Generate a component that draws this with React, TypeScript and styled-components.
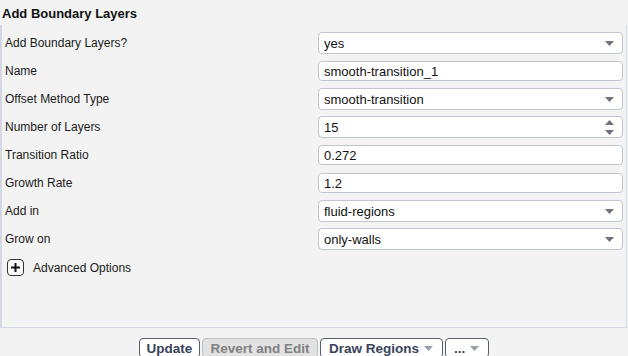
import styled, { createGlobalStyle } from 'styled-components'

const GlobalStyle = createGlobalStyle`
  html, body {
    margin: 0;
    padding: 0;
    background: #f3f3f3;
    font-family: "Liberation Sans", Arial, sans-serif;
    color: #1b1b1b;
  }
`

type Field =
  | { label: string; kind: 'select'; value: string }
  | { label: string; kind: 'text'; value: string }
  | { label: string; kind: 'spin'; value: string }

const fields: Field[] = [
  { label: 'Add Boundary Layers?', kind: 'select', value: 'yes' },
  { label: 'Name', kind: 'text', value: 'smooth-transition_1' },
  { label: 'Offset Method Type', kind: 'select', value: 'smooth-transition' },
  { label: 'Number of Layers', kind: 'spin', value: '15' },
  { label: 'Transition Ratio', kind: 'text', value: '0.272' },
  { label: 'Growth Rate', kind: 'text', value: '1.2' },
  { label: 'Add in', kind: 'select', value: 'fluid-regions' },
  { label: 'Grow on', kind: 'select', value: 'only-walls' },
]

function CaretDown({ color = '#6e727c' }: { color?: string }) {
  return (
    <svg width="9" height="5" viewBox="0 0 9 5">
      <path d="M0 0 H9 L4.5 5 Z" fill={color} />
    </svg>
  )
}

function Spinner() {
  return (
    <SpinBox>
      <svg width="9" height="5" viewBox="0 0 9 5">
        <path d="M0 5 H9 L4.5 0 Z" fill="#6e727c" />
      </svg>
      <svg width="9" height="5" viewBox="0 0 9 5">
        <path d="M0 0 H9 L4.5 5 Z" fill="#6e727c" />
      </svg>
    </SpinBox>
  )
}

function App() {
  return (
    <>
      <GlobalStyle />
      <Page>
        <Title>Add Boundary Layers</Title>
        <Panel>
          <FormGrid>
            {fields.map((f) => (
              <Row key={f.label}>
                <Label>{f.label}</Label>
                <Control $tall={f.kind !== 'text'}>
                  <Value>{f.value}</Value>
                  {f.kind === 'select' && <CaretDown />}
                  {f.kind === 'spin' && <Spinner />}
                </Control>
              </Row>
            ))}
          </FormGrid>
          <Expander>
            <PlusBox>
              <svg width="9" height="9" viewBox="0 0 9 9">
                <path d="M4.5 0 V9 M0 4.5 H9" stroke="#111" strokeWidth="2" />
              </svg>
            </PlusBox>
            <span>Advanced Options</span>
          </Expander>
        </Panel>
        <ButtonBar>
          <Button $w={61}>Update</Button>
          <Button $w={116} disabled>
            Revert and Edit
          </Button>
          <Button $w={123} $menu>
            Draw Regions
            <CaretDown color="#9aa0aa" />
          </Button>
          <Button $w={44} $menu>
            ...
            <CaretDown color="#9aa0aa" />
          </Button>
        </ButtonBar>
      </Page>
    </>
  )
}

const Page = styled.div`
  width: 628px;
  height: 356px;
  overflow: hidden;
`

const Title = styled.div`
  height: 25px;
  line-height: 27px;
  padding-left: 2px;
  font-size: 13px;
  font-weight: bold;
  color: #111;
`

const Panel = styled.div`
  box-sizing: border-box;
  width: 627px;
  height: 303px;
  border: 1px solid #d3d8e2;
  border-left-width: 2px;
  border-top: none;
  padding-top: 4px;
`

const FormGrid = styled.div`
  display: flex;
  flex-direction: column;
`

const Row = styled.div`
  display: grid;
  grid-template-columns: 316px 1fr;
  align-items: center;
  height: 28px;
  padding-right: 3px;
`

const Label = styled.div`
  padding-left: 3px;
  font-size: 12px;
  color: #1b1b1b;
`

const Control = styled.div<{ $tall: boolean }>`
  box-sizing: border-box;
  height: ${(p) => (p.$tall ? '22px' : '20px')};
  display: flex;
  align-items: center;
  justify-content: space-between;
  padding: 0 8px 0 5px;
  background: #fff;
  border: 1px solid #bfc5d1;
  border-radius: 4px;
`

const Value = styled.span`
  font-size: 13px;
  color: #111;
`

const SpinBox = styled.div`
  display: flex;
  flex-direction: column;
  gap: 5px;
`

const Expander = styled.div`
  display: flex;
  align-items: center;
  gap: 9px;
  height: 29px;
  padding-left: 5px;
  font-size: 12px;
`

const PlusBox = styled.div`
  box-sizing: border-box;
  width: 17px;
  height: 17px;
  display: flex;
  align-items: center;
  justify-content: center;
  border: 1.5px solid #333;
  border-radius: 4px;
  background: #fafafa;
`

const ButtonBar = styled.div`
  display: flex;
  justify-content: center;
  gap: 2px;
  padding-top: 10px;
`

const Button = styled.button<{ $w: number; $menu?: boolean }>`
  box-sizing: border-box;
  width: ${(p) => p.$w}px;
  height: 20px;
  display: flex;
  align-items: center;
  justify-content: ${(p) => (p.$menu ? 'space-between' : 'center')};
  padding: ${(p) => (p.$menu ? '0 9px 0 8px' : '0')};
  font-family: "Liberation Sans", Arial, sans-serif;
  font-size: 13.5px;
  font-weight: bold;
  color: #374458;
  background: #fff;
  border: 1px solid #56606e;
  border-radius: 4px;

  &:disabled {
    color: #808080;
    background: #e2e2e2;
    border-color: #c3c3c3;
  }
`

export default App
